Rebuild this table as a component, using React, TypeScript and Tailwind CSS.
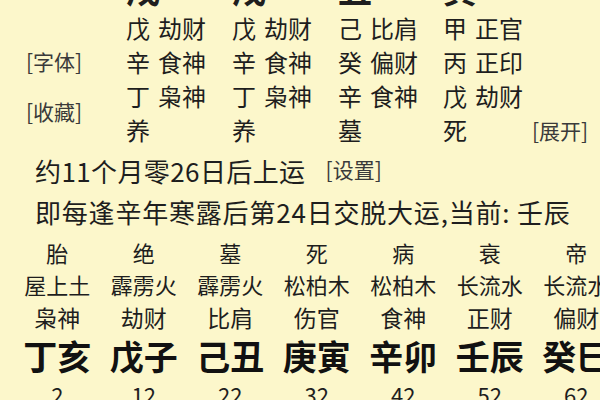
import * as React from "react";

const pillars = [
    { branch: "戌", hidden: [["戊", "劫财"], ["辛", "食神"], ["丁", "枭神"]], stage: "养" },
    { branch: "戌", hidden: [["戊", "劫财"], ["辛", "食神"], ["丁", "枭神"]], stage: "养" },
    { branch: "丑", hidden: [["己", "比肩"], ["癸", "偏财"], ["辛", "食神"]], stage: "墓" },
    { branch: "寅", hidden: [["甲", "正官"], ["丙", "正印"], ["戊", "劫财"]], stage: "死" },
];

const dayun = [
    { stage: "胎", nayin: "屋上土", god: "枭神", gz: "丁亥", age: 2 },
    { stage: "绝", nayin: "霹雳火", god: "劫财", gz: "戊子", age: 12 },
    { stage: "墓", nayin: "霹雳火", god: "比肩", gz: "己丑", age: 22 },
    { stage: "死", nayin: "松柏木", god: "伤官", gz: "庚寅", age: 32 },
    { stage: "病", nayin: "松柏木", god: "食神", gz: "辛卯", age: 42 },
    { stage: "衰", nayin: "长流水", god: "正财", gz: "壬辰", age: 52 },
    { stage: "帝", nayin: "长流水", god: "偏财", gz: "癸巳", age: 62 },
];

export default function App() {
    return (
        <div className="w-[600px] h-[400px] overflow-hidden bg-[#fcf7cb] text-[#1e1e1e] font-['Noto_Sans_CJK_SC',sans-serif]">
            {/* pillars: hidden stems */}
            <div className="flex mt-[-23px]">
                <div className="w-[126px] pl-[26px] pt-[67px] text-[21px] text-[#3a3a3a]">
                    <div className="h-[34px] leading-[34px]">[字体]</div>
                    <div className="h-[34px] leading-[34px] mt-[16px]">[收藏]</div>
                </div>
                <div className="grid grid-cols-[106px_106px_105px_89px_auto] auto-rows-[34px]">
                    {pillars.map((p, i) => (
                        <div key={"b" + i} className="text-[34px] font-bold leading-[24px] overflow-hidden">{p.branch}</div>
                    ))}
                    <div></div>
                    {[0, 1, 2].map(r => (
                        <React.Fragment key={r}>
                            {pillars.map((p, i) => (
                                <div key={i} className="flex gap-[8px] text-[24px] leading-[34px] whitespace-nowrap">
                                    <span>{p.hidden[r][0]}</span>
                                    <span>{p.hidden[r][1]}</span>
                                </div>
                            ))}
                            <div></div>
                        </React.Fragment>
                    ))}
                    {pillars.map((p, i) => (
                        <div key={"s" + i} className="text-[24px] leading-[34px]">{p.stage}</div>
                    ))}
                    <div className="text-[21px] leading-[34px] text-[#3a3a3a]">[展开]</div>
                </div>
            </div>

            {/* start of luck */}
            <div className="pl-[35px] mt-[5px] h-[36px] flex items-center whitespace-nowrap">
                <span className="text-[26px] tracking-[0.4px]">约11个月零26日后上运</span>
                <span className="ml-[20px] text-[21px] text-[#3a3a3a]">[设置]</span>
            </div>
            <div className="pl-[35px] mt-[5px] h-[36px] flex items-center whitespace-nowrap text-[26px] tracking-[0.8px]">
                即每逢辛年寒露后第24日交脱大运,当前: 壬辰
            </div>

            {/* da yun table */}
            <div className="grid grid-cols-[repeat(7,86.5px)] pl-[14px] mt-[7px] whitespace-nowrap">
                {dayun.map((d, i) => (
                    <div key={i} className="flex flex-col items-center">
                        <div className="h-[32px] leading-[32px] text-[22px]">{d.stage}</div>
                        <div className="h-[32px] leading-[32px] text-[22px]">{d.nayin}</div>
                        <div className="h-[34px] leading-[34px] text-[23px]">{d.god}</div>
                        <div className="h-[44px] leading-[44px] text-[34px] font-bold text-[#111]">{d.gz}</div>
                        <div className="h-[32px] leading-[32px] text-[22px]">{d.age}</div>
                    </div>
                ))}
            </div>
        </div>
    );
}
